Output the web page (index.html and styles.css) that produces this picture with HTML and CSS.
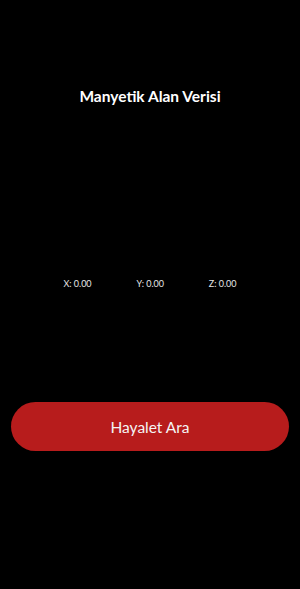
FILE: index.html
```html
<!DOCTYPE html>
<html lang="tr">
<head>
  <meta charset="UTF-8" />
  <title>Hayalet Dedektörü</title>
  <meta name="viewport" content="width=device-width, initial-scale=1.0" />
  <link rel="stylesheet" href="styles.css">
</head>
<body>
  <div class="screen">
    <h1 class="title">Manyetik Alan Verisi</h1>
    <div class="axes">
      <span class="axis">X: 0.00</span>
      <span class="axis">Y: 0.00</span>
      <span class="axis">Z: 0.00</span>
    </div>
    <button class="scan-button">Hayalet Ara</button>
  </div>
</body>
</html>
```

FILE: styles.css
```css
body {
  margin: 0;
  background: #000;
  font-family: Lato, "Liberation Sans", sans-serif;
  color: #fff;
}

.screen {
  height: 589px;
  padding: 86px 11px 0;
  box-sizing: border-box;
  display: flex;
  flex-direction: column;
}

.title {
  margin: 0;
  font-size: 15.5px;
  line-height: 20px;
  font-weight: 700;
  text-align: center;
}

/* 磁場の値 */
.axes {
  margin-top: 172px;
  padding: 0 30px;
  display: flex;
  justify-content: space-around;
  font-size: 9px;
  line-height: 12px;
  color: #e6e6e6;
}

.scan-button {
  margin-top: 112px;
  height: 49px;
  width: 100%;
  border: none;
  border-radius: 25px;
  background: #b71c1c;
  color: #f4f4f4;
  font-family: inherit;
  font-size: 15.5px;
  cursor: pointer;
}
```
